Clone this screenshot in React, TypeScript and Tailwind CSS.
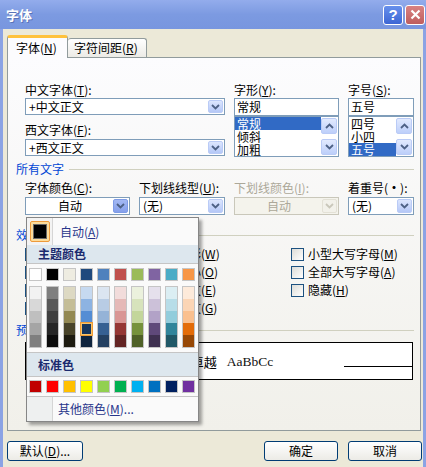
import React from "react";

const theme = ["#FFFFFF", "#000000", "#EEECE1", "#1F497D", "#4F81BD", "#C0504D", "#9BBB59", "#8064A2", "#4BACC6", "#F79646"];
const shades = [
  ["#F2F2F2", "#D8D8D8", "#BFBFBF", "#A5A5A5", "#7F7F7F"],
  ["#7F7F7F", "#595959", "#3F3F3F", "#262626", "#0C0C0C"],
  ["#DDD9C3", "#C4BD97", "#938953", "#494429", "#1D1B10"],
  ["#C6D9F0", "#8DB3E2", "#548DD4", "#17365D", "#0F243E"],
  ["#DBE5F1", "#B8CCE4", "#95B3D7", "#366092", "#244061"],
  ["#F2DCDB", "#E5B9B7", "#D99694", "#953734", "#632423"],
  ["#EBF1DD", "#D7E3BC", "#C3D69B", "#76923C", "#4F6128"],
  ["#E5E0EC", "#CCC1D9", "#B2A2C7", "#5F497A", "#3F3151"],
  ["#DBEEF3", "#B7DDE8", "#92CDDC", "#31859B", "#205867"],
  ["#FDEADA", "#FBD5B5", "#FAC08F", "#E36C09", "#974806"],
];
const std = ["#C00000", "#FF0000", "#FFC000", "#FFFF00", "#92D050", "#00B050", "#00B0F0", "#0070C0", "#002060", "#7030A0"];

function Mn({ c }: { c: string }) {
  return (
    <>
      (<span className="underline">{c}</span>)
    </>
  );
}

function Chevron({ color = "#4D6185", up = false }: { color?: string; up?: boolean }) {
  return (
    <svg width="9" height="6" viewBox="0 0 9 6">
      <path d={up ? "M1 5 L4.5 1.5 L8 5" : "M1 1 L4.5 4.5 L8 1"} fill="none" stroke={color} strokeWidth="1.8" />
    </svg>
  );
}

function DropBtn({ variant = "normal" }: { variant?: string }) {
  const cls =
    variant === "hot"
      ? "border-[#7E9BE6] bg-linear-to-b from-[#A3B8F3] to-[#86A0EB]"
      : variant === "disabled"
      ? "border-[#E3E1D6] bg-[#F2F1EA]"
      : "border-[#BACBF6] bg-linear-to-b from-[#DCE6FE] to-[#B5C8F7]";
  return (
    <div className={`flex w-[15px] items-center justify-center rounded-[2px] border ${cls}`}>
      <Chevron color={variant === "disabled" ? "#C9C7BA" : "#4D6185"} />
    </div>
  );
}

function Combo({
  w,
  h = "h-[17px]",
  text,
  center = false,
  variant = "normal",
}: {
  w: string;
  h?: string;
  text: string;
  center?: boolean;
  variant?: string;
}) {
  const disabled = variant === "disabled";
  return (
    <div className={`${w} ${h} flex border p-px ${disabled ? "border-[#C9C7BA] bg-[#F4F3EC]" : "border-[#7F9DB9] bg-white"}`}>
      <div className={`flex flex-1 items-center ${center ? "justify-center" : "pl-[2px]"} ${disabled ? "text-[#ACA899]" : ""}`}>
        {text}
      </div>
      <DropBtn variant={variant} />
    </div>
  );
}

function ScrollBtn({ up = false }: { up?: boolean }) {
  return (
    <div className="flex h-[16px] w-[16px] items-center justify-center rounded-[2px] border border-[#BACBF6] bg-linear-to-b from-[#E2EAFE] to-[#BDCFFA]">
      <Chevron up={up} />
    </div>
  );
}

function ListBox({ w, items, sel }: { w: string; items: string[]; sel: number }) {
  return (
    <div className={`${w} flex h-[41px] border border-[#7F9DB9] bg-white`}>
      <div className="flex flex-1 flex-col">
        {items.map((t, i) => (
          <div key={i} className={`h-[13px] pl-[2px] leading-[13px] ${i === sel ? "bg-[#316AC5] text-white" : ""}`}>
            {t}
          </div>
        ))}
      </div>
      <div className="flex w-[17px] flex-col justify-between py-px pr-px">
        <ScrollBtn up />
        <ScrollBtn />
      </div>
    </div>
  );
}

function Check() {
  return <span className="block h-[13px] w-[13px] shrink-0 border border-[#1C5180] bg-linear-to-br from-[#DCDCD7] to-white" />;
}

function CheckRow({ children }: { children?: React.ReactNode }) {
  return (
    <div className="flex h-[18px] items-center gap-[4px]">
      <Check />
      {children ? <span className="whitespace-nowrap">{children}</span> : null}
    </div>
  );
}

function Section({ title }: { title: string }) {
  return (
    <div className="flex h-[16px] items-center">
      <span className="text-[#0046D5]">{title}</span>
      <div className="ml-[5px] h-px flex-1 bg-[#D0D0BF]" />
    </div>
  );
}

function XPButton({ w, children }: { w: string; children: React.ReactNode }) {
  return (
    <div className={`${w} flex h-[20px] items-center justify-center rounded-[3px] border border-[#003C74] bg-linear-to-b from-white to-[#ECEBE6]`}>
      {children}
    </div>
  );
}

export default function App() {
  return (
    <div className="relative h-[467px] w-[426px] overflow-hidden bg-[#8BA3E4] font-['SimSun','Noto_Sans_CJK_SC',sans-serif] text-[12px] leading-none text-black">
      {/* title bar */}
      <div className="flex h-[29px] items-center bg-linear-to-b from-[#93ACEC] via-[#7C9AE1] to-[#7896DF] pl-[6px] pr-[1px]">
        <span className="text-[13px] font-bold text-white [text-shadow:1px_1px_0_#5A73B8]">字体</span>
        <div className="ml-auto flex gap-[2px]">
          <div className="flex h-[20px] w-[20px] items-center justify-center rounded-[3px] border border-white bg-linear-to-b from-[#6790EC] to-[#3D66D4] font-['Liberation_Sans',sans-serif] text-[15px] font-bold text-white">
            ?
          </div>
          <div className="flex h-[20px] w-[20px] items-center justify-center rounded-[3px] border border-white bg-linear-to-b from-[#D98282] to-[#BE5E5E]">
            <svg width="11" height="11" viewBox="0 0 11 11">
              <path d="M1.5 1.5 L9.5 9.5 M9.5 1.5 L1.5 9.5" stroke="white" strokeWidth="2.2" />
            </svg>
          </div>
        </div>
      </div>

      {/* body */}
      <div className="mx-[3px] flex h-[438px] flex-col bg-[#ECE9D8]">
        {/* tabs */}
        <div className="mt-[6px] flex h-[22px] items-end pl-[4px]">
          <div className="relative z-10 -mb-px flex h-[23px] w-[61px] items-center rounded-t-[3px] border border-b-0 border-t-[3px] border-[#919B9C] border-t-[#FFC23C] bg-[#FCFCFE] pl-[8px]">
            字体<Mn c="N" />
          </div>
          <div className="flex h-[19px] w-[79px] items-center rounded-t-[3px] border border-b-0 border-l-0 border-[#919B9C] bg-linear-to-b from-white to-[#ECEBE6] pl-[6px]">
            字符间距<Mn c="R" />
          </div>
        </div>

        {/* panel */}
        <div className="ml-[4px] h-[374px] w-[414px] border border-[#919B9C] bg-linear-to-b from-[#FCFCFE] to-[#F1F0EA] pl-[8px] pr-[6px] pt-[24px]">
          <div className="flex gap-[9px] pl-[9px]">
            <div className="w-[200px]">
              <div className="h-[16px] leading-[16px]">
                中文字体<Mn c="T" />:
              </div>
              <Combo w="w-[200px]" text="+中文正文" />
              <div className="h-[24px] pt-[7px] leading-[16px]">
                西文字体<Mn c="F" />:
              </div>
              <Combo w="w-[200px]" text="+西文正文" />
            </div>
            <div className="w-[105px]">
              <div className="h-[16px] leading-[16px]">
                字形<Mn c="Y" />:
              </div>
              <div className="flex h-[18px] items-center border border-[#7F9DB9] bg-white pl-[2px]">常规</div>
              <ListBox w="w-[105px]" items={["常规", "倾斜", "加粗"]} sel={0} />
            </div>
            <div className="w-[66px]">
              <div className="h-[16px] leading-[16px]">
                字号<Mn c="S" />:
              </div>
              <div className="flex h-[18px] items-center border border-[#7F9DB9] bg-white pl-[2px]">五号</div>
              <ListBox w="w-[66px]" items={["四号", "小四", "五号"]} sel={2} />
            </div>
          </div>

          <div className="mt-[4px]">
            <Section title="所有文字" />
          </div>

          <div className="mt-[3px] flex gap-[9px] pl-[9px]">
            <div className="w-[105px]">
              <div className="h-[17px] leading-[16px]">
                字体颜色<Mn c="C" />:
              </div>
              <Combo w="w-[105px]" h="h-[18px]" text="自动" center variant="hot" />
            </div>
            <div className="w-[86px]">
              <div className="h-[17px] whitespace-nowrap leading-[16px]">
                下划线线型<Mn c="U" />:
              </div>
              <Combo w="w-[86px]" h="h-[18px]" text="(无)" />
            </div>
            <div className="w-[105px]">
              <div className="h-[17px] whitespace-nowrap leading-[16px] text-[#ACA899]">
                下划线颜色<Mn c="I" />:
              </div>
              <Combo w="w-[105px]" h="h-[18px]" text="自动" center variant="disabled" />
            </div>
            <div className="w-[66px]">
              <div className="h-[17px] whitespace-nowrap leading-[16px]">
                着重号(<span className="font-bold">·</span>):
              </div>
              <Combo w="w-[66px]" h="h-[18px]" text="(无)" />
            </div>
          </div>

          <div className="mt-[12px]">
            <Section title="效果" />
          </div>

          <div className="mt-[2px] flex pl-[9px]">
            <div className="w-[135px]">
              <CheckRow />
              <CheckRow />
              <CheckRow />
              <CheckRow />
            </div>
            <div className="w-[131px]">
              <CheckRow>
                阴影<Mn c="W" />
              </CheckRow>
              <CheckRow>
                空心<Mn c="O" />
              </CheckRow>
              <CheckRow>
                阳文<Mn c="E" />
              </CheckRow>
              <CheckRow>
                阴文<Mn c="G" />
              </CheckRow>
            </div>
            <div>
              <CheckRow>
                小型大写字母<Mn c="M" />
              </CheckRow>
              <CheckRow>
                全部大写字母<Mn c="A" />
              </CheckRow>
              <CheckRow>
                隐藏<Mn c="H" />
              </CheckRow>
            </div>
          </div>

          <div className="mt-[5px]">
            <Section title="预览" />
          </div>

          <div className="ml-[9px] mt-[4px] flex h-[38px] w-[388px] border border-black bg-white">
            <div className="mt-[23px] h-px w-[68px] bg-black" />
            <div className="flex flex-1 items-center justify-center pt-[1px]">
              <span className="text-[13px]">微软卓越</span>
              <span className="ml-[10px] font-['Liberation_Serif',serif] text-[13.5px] text-[#111]">AaBbCc</span>
            </div>
            <div className="mt-[23px] h-px w-[68px] bg-black" />
          </div>
        </div>

        {/* buttons */}
        <div className="mt-[10px] flex pl-[4px] pr-px">
          <XPButton w="w-[76px]">
            默认<Mn c="D" />...
          </XPButton>
          <div className="flex-1" />
          <XPButton w="w-[74px]">确定</XPButton>
          <div className="w-[10px]" />
          <XPButton w="w-[74px]">取消</XPButton>
        </div>
      </div>

      {/* color popup */}
      <div className="absolute left-[26px] top-[217px] flex h-[205px] w-[173px] flex-col border border-[#868686] bg-[#FAFAFA] shadow-[3px_3px_3px_rgba(0,0,0,0.35)]">
        <div className="flex h-[27px] shrink-0">
          <div className="flex w-[26px] items-center justify-center border-r border-[#D5D5D5] bg-[#F3F3F3]">
            <div className="flex h-[21px] w-[20px] items-center justify-center rounded-[2px] border border-[#EE9A3A] bg-[#FDDC9A]">
              <div className="h-[15px] w-[14px] border border-[#6A6A6A] bg-black" />
            </div>
          </div>
          <div className="flex items-center pl-[7px] text-[#27358A]">
            自动(<span className="underline">A</span>)
          </div>
        </div>
        <div className="flex h-[19px] shrink-0 items-center border-b border-[#C5C5C5] bg-[#DDE7EE] pl-[11px] font-bold text-[#1B2A6E]">
          主题颜色
        </div>
        <div className="flex shrink-0 flex-col gap-[5px] pl-[2px] pt-[4px]">
          <div className="flex gap-[4px]">
            {theme.map((c, i) => (
              <div key={i} className="h-[13px] w-[13px] border border-[#C5C5C5]" style={{ backgroundColor: c }} />
            ))}
          </div>
          <div className="flex gap-[4px]">
            {shades.map((col, i) => (
              <div key={i} className="flex w-[13px] flex-col border border-[#C5C5C5]">
                {col.map((c, j) => (
                  <div
                    key={j}
                    className={`h-[12px] ${i === 3 && j === 3 ? "relative z-10 shadow-[0_0_0_1px_#EF9A35,inset_0_0_0_1px_#F8C46A]" : ""}`}
                    style={{ backgroundColor: c }}
                  />
                ))}
              </div>
            ))}
          </div>
        </div>
        <div className="mt-[4px] flex h-[25px] shrink-0 items-center border-y border-[#C5C5C5] bg-[#DDE7EE] pl-[11px] font-bold text-[#1B2A6E]">
          标准色
        </div>
        <div className="flex h-[20px] shrink-0 gap-[4px] border-b border-[#C5C5C5] pl-[2px] pt-[3px]">
          {std.map((c, i) => (
            <div key={i} className="h-[13px] w-[13px] border border-[#C5C5C5]" style={{ backgroundColor: c }} />
          ))}
        </div>
        <div className="flex flex-1">
          <div className="w-[26px] border-r border-[#D5D5D5] bg-[#EEF0F0]" />
          <div className="flex items-center pl-[5px] text-[#27358A]">
            其他颜色(<span className="underline">M</span>)...
          </div>
        </div>
      </div>
    </div>
  );
}
